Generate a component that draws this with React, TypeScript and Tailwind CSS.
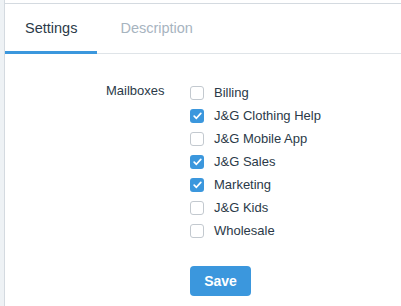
import React, { useState } from 'react'

const mailboxes = [
  { name: 'Billing', checked: false },
  { name: 'J&G Clothing Help', checked: true },
  { name: 'J&G Mobile App', checked: false },
  { name: 'J&G Sales', checked: true },
  { name: 'Marketing', checked: true },
  { name: 'J&G Kids', checked: false },
  { name: 'Wholesale', checked: false },
]

const Checkbox = ({ checked, onClick }: { checked: boolean; onClick: () => void }) => (
  <span
    onClick={onClick}
    className={
      checked
        ? 'flex h-[14px] w-[14px] items-center justify-center rounded-[3px] bg-[#3b97dd]'
        : 'flex h-[14px] w-[14px] items-center justify-center rounded-[3px] border border-[#c3c9cf] bg-white'
    }
  >
    {checked && (
      <svg width="9" height="8" viewBox="0 0 9 8" fill="none">
        <path d="M1.2 4.2 3.4 6.3 7.8 1.4" stroke="white" strokeWidth="1.7" strokeLinecap="round" strokeLinejoin="round" />
      </svg>
    )}
  </span>
)

const App = () => {
  const [items, setItems] = useState(mailboxes)

  return (
    <div className="flex h-[306px] w-[401px] bg-white font-['Liberation_Sans',Arial,sans-serif] text-[13px] text-[#2b3a48]">
      <div className="w-[4px] bg-[#eef2f5]" />
      <div className="flex-1 border-l border-[#d4dae0] pt-[3px]">
        <div className="border-t border-[#d4dae0]">
          <div className="flex h-[50px] border-b border-[#dfe4e8]">
            <div className="-mb-px flex items-center border-b-[3px] border-[#3b97dd] px-[20px] pt-[3px] text-[14.5px] text-[#2b3a48]">
              Settings
            </div>
            <div className="flex items-center px-[23px] text-[14.5px] text-[#a7b4bf]">Description</div>
          </div>
          <div className="flex pl-[101px] pt-[27px]">
            <div className="w-[84px] text-[#2b3a48]">Mailboxes</div>
            <div className="flex flex-col">
              <div className="flex flex-col gap-[7px] pt-[4px]">
                {items.map((m, i) => (
                  <label key={m.name} className="flex h-[16px] items-center gap-[10px]">
                    <Checkbox
                      checked={m.checked}
                      onClick={() => setItems(items.map((x, j) => (j === i ? { ...x, checked: !x.checked } : x)))}
                    />
                    <span>{m.name}</span>
                  </label>
                ))}
              </div>
              <button className="mt-[27px] h-[30px] w-[61px] rounded-[4px] bg-[#3b97dd] text-[14px] font-bold text-white">
                Save
              </button>
            </div>
          </div>
        </div>
      </div>
    </div>
  )
}

export default App
